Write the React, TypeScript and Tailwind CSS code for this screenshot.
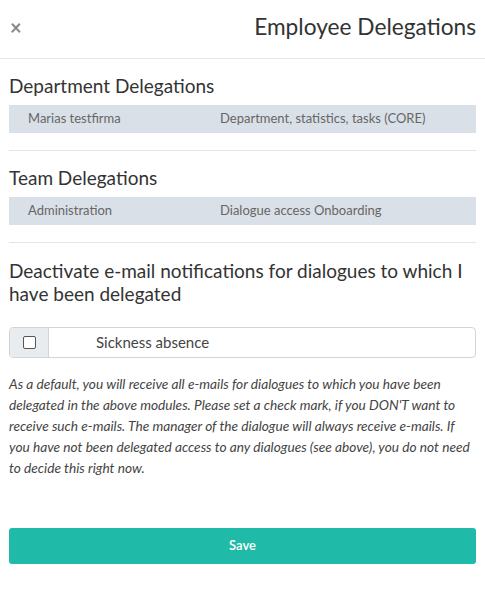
export default function App() {
  const font = { fontFamily: '"Source Sans Pro", Lato, "Open Sans", sans-serif' };
  return (
    <div className="w-[485px] h-[607px] bg-white text-[#333]" style={font}>
      <div className="h-[59px] flex items-center justify-between pl-[10px] pr-[9px] border-b border-[#e5e5e5]">
        <span className="text-[#888] text-[20px] font-bold leading-none -mt-[5px]">×</span>
        <h1 className="text-[22.7px] text-[#333] leading-none -mt-[4px]">Employee Delegations</h1>
      </div>
      <div className="px-[9px]">
        <h2 className="text-[19px] leading-[24px] mt-[15px] mb-[7px]">Department Delegations</h2>
        <div className="h-[28px] bg-[#dae0e8] flex items-center text-[13px] text-[#666]">
          <span className="w-[211px] pl-[19px]">Marias testfirma</span>
          <span>Department, statistics, tasks (CORE)</span>
        </div>
        <div className="border-t border-[#e5e5e5] mt-[17px]" />
        <h2 className="text-[19px] leading-[24px] mt-[15px] mb-[7px]">Team Delegations</h2>
        <div className="h-[28px] bg-[#dae0e8] flex items-center text-[13px] text-[#666]">
          <span className="w-[211px] pl-[19px]">Administration</span>
          <span>Dialogue access Onboarding</span>
        </div>
        <div className="border-t border-[#e5e5e5] mt-[17px]" />
        <h2 className="text-[19px] leading-[23px] mt-[16px]">Deactivate e-mail notifications for dialogues to which I have been delegated</h2>
        <div className="mt-[22px] h-[31px] flex border border-[#d4d4d4] rounded-[4px] overflow-hidden">
          <div className="w-[39px] bg-[#e9ecef] border-r border-[#d4d4d4] flex items-center justify-center">
            <div className="w-[13px] h-[13px] border border-[#555] rounded-[2px] bg-white" />
          </div>
          <div className="flex items-center pl-[47px] text-[15px] text-[#444]">Sickness absence</div>
        </div>
        <p className="mt-[15px] text-[13.7px] leading-[21px] italic text-[#444]">
          As a default, you will receive all e-mails for dialogues to which you have been delegated in the above modules. Please set a check mark, if you DON'T want to receive such e-mails. The manager of the dialogue will always receive e-mails. If you have not been delegated access to any dialogues (see above), you do not need to decide this right now.
        </p>
        <button className="mt-[50px] w-full h-[36px] bg-[#20bba8] rounded-[3px] text-white text-[13px] font-semibold">Save</button>
      </div>
    </div>
  );
}
